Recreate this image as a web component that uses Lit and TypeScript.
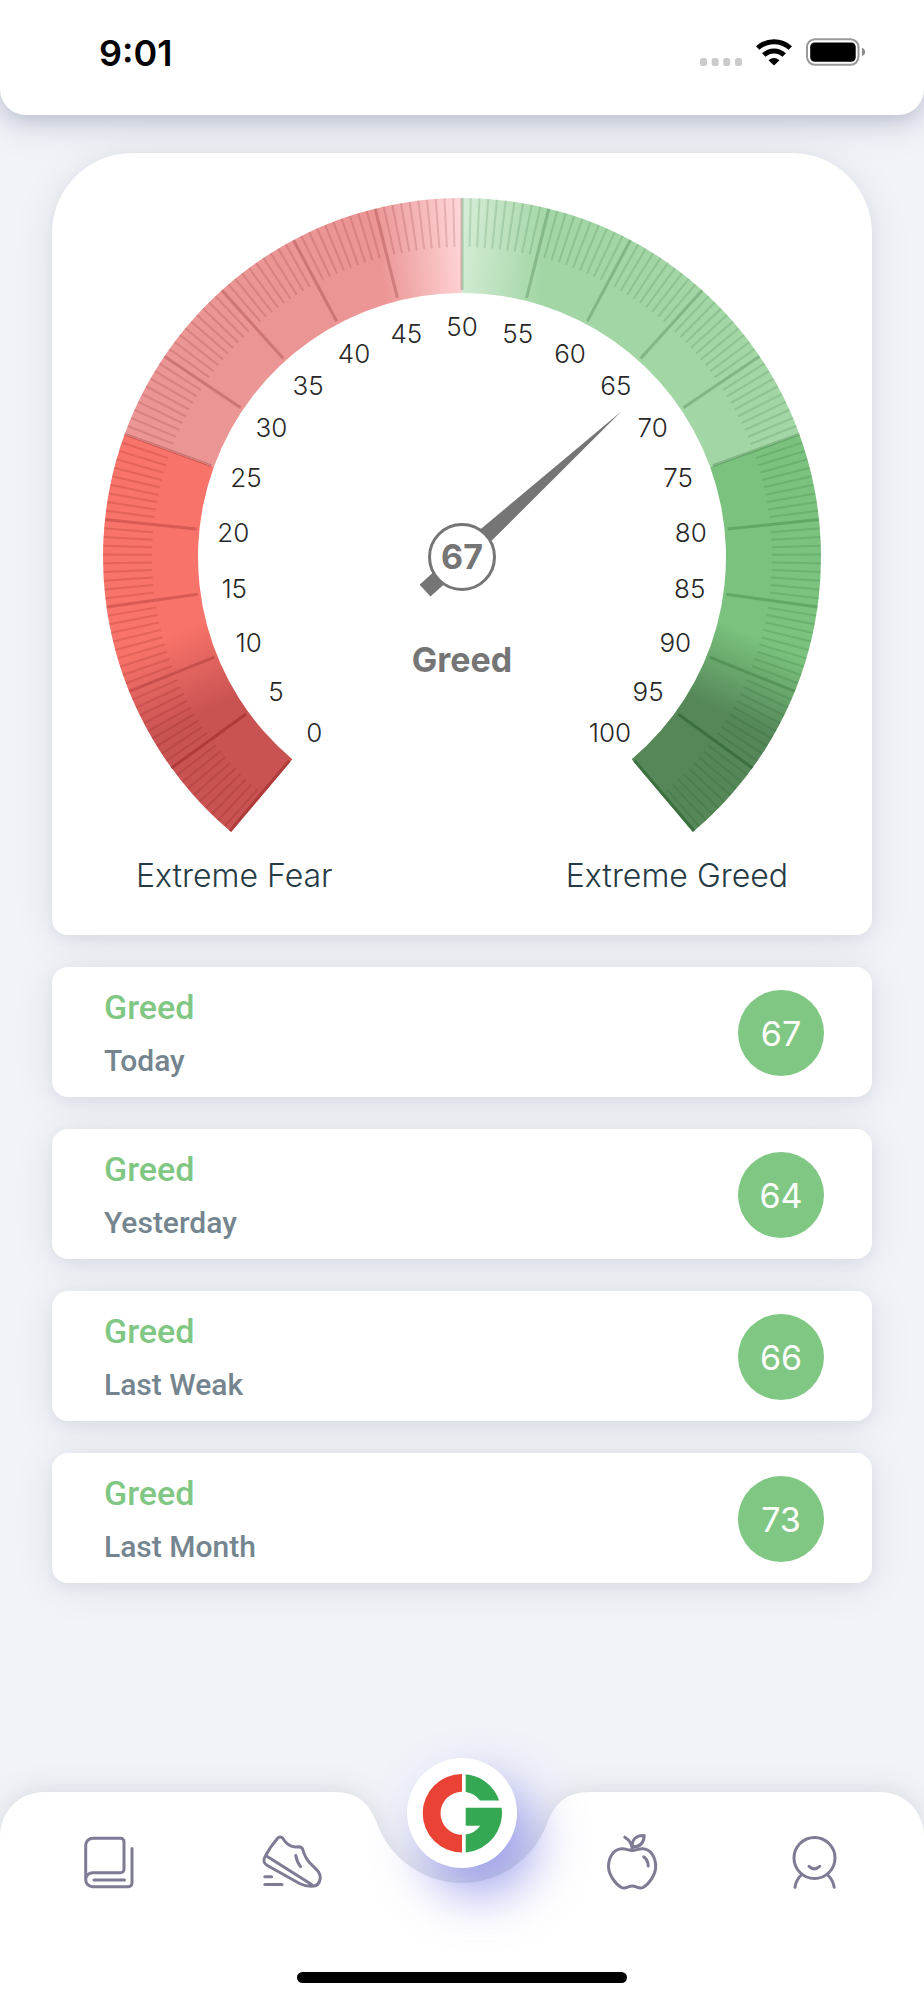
import { LitElement, html, svg, css } from "lit";
import { customElement, property } from "lit/decorators.js";

const CX = 410;
const CY = 404;
const OUTER = 359;
const INNER = 264;
const MINOR_INNER = 310;
const MAJOR_INNER = 267;
const LABEL_RADIUS = 230;

/* The scale sweeps 280 degrees, symmetric about twelve o'clock. */
const angleOf = (value: number) => ((value * 2.8 - 140) * Math.PI) / 180;
const pointAt = (value: number, radius: number) => {
  const a = angleOf(value);
  return [CX + radius * Math.sin(a), CY - radius * Math.cos(a)];
};
const f = (n: number) => n.toFixed(2);

function band(from: number, to: number): string {
  const [ax, ay] = pointAt(from, OUTER);
  const [bx, by] = pointAt(to, OUTER);
  const [cx, cy] = pointAt(to, INNER);
  const [dx, dy] = pointAt(from, INNER);
  return `M${f(ax)} ${f(ay)}A${OUTER} ${OUTER} 0 0 1 ${f(bx)} ${f(by)}L${f(cx)} ${f(cy)}A${INNER} ${INNER} 0 0 0 ${f(dx)} ${f(dy)}Z`;
}

function tick(value: number, inner: number): string {
  /* Marks at the two ends of the scale stay inside the band. */
  const v = Math.min(Math.max(value, 0.1), 99.9);
  const [ax, ay] = pointAt(v, OUTER);
  const [bx, by] = pointAt(v, inner);
  return `M${f(ax)} ${f(ay)}L${f(bx)} ${f(by)}`;
}

function ticks(from: number, to: number, major: boolean): string {
  let d = "";
  for (let half = from * 2; half <= to * 2; half++) {
    if ((half % 10 === 0) !== major) continue;
    d += tick(half / 2, major ? MAJOR_INNER : MINOR_INNER);
  }
  return d;
}

@customElement("sentiment-gauge")
class SentimentGauge extends LitElement {
  @property({ type: Number }) value = 0;
  @property() label = "";

  static styles = css`
    :host {
      display: block;
    }
    .dial {
      display: block;
      width: 100%;
      height: auto;
    }
    .scale {
      font: 350 26px Inter, "Liberation Sans", sans-serif;
      fill: #282828;
      text-anchor: middle;
    }
    .strong {
      font: 700 34px Inter, "Liberation Sans", sans-serif;
      fill: #757575;
      text-anchor: middle;
    }
    .major {
      fill: none;
      stroke-width: 3;
    }
    .minor {
      fill: none;
      stroke-width: 2;
    }
    .fear-tick {
      stroke: rgb(100, 8, 8);
    }
    .greed-tick {
      stroke: rgb(20, 75, 25);
    }
    .major.fear-tick,
    .major.greed-tick {
      stroke-opacity: 0.22;
    }
    .minor.fear-tick,
    .minor.greed-tick {
      stroke-opacity: 0.14;
    }
    .fear-deep {
      stroke: #b03b3b;
    }
    .greed-deep {
      stroke: #3c703f;
    }
    .needle {
      fill: #757575;
    }
    .hub {
      fill: #fff;
      stroke: #757575;
      stroke-width: 3;
    }
  `;

  render() {
    const marks = Array.from({ length: 21 }, (_, i) => i * 5);
    return html`<svg class="dial" viewBox="0 0 820 684" role="img" aria-label="${this.label}, ${this.value} of 100">
      <defs>
        <linearGradient id="fear" gradientUnits="userSpaceOnUse" x1="146" y1="470" x2="181" y2="545">
          <stop offset="0" stop-color="#f87369" />
          <stop offset="1" stop-color="#c95353" />
        </linearGradient>
        <linearGradient id="fear-soft" gradientUnits="userSpaceOnUse" x1="325" y1="92" x2="410" y2="82">
          <stop offset="0" stop-color="#eb9594" />
          <stop offset="1" stop-color="#ffd5d8" />
        </linearGradient>
        <linearGradient id="greed-soft" gradientUnits="userSpaceOnUse" x1="410" y1="82" x2="495" y2="92">
          <stop offset="0" stop-color="#d4ecd5" />
          <stop offset="1" stop-color="#a2d6a5" />
        </linearGradient>
        <linearGradient id="greed" gradientUnits="userSpaceOnUse" x1="674" y1="470" x2="639" y2="545">
          <stop offset="0" stop-color="#7ac27e" />
          <stop offset="1" stop-color="#558758" />
        </linearGradient>
      </defs>
      <path d=${band(0, 25)} fill="url(#fear)" />
      <path d=${band(25, 50)} fill="url(#fear-soft)" />
      <path d=${band(50, 75)} fill="url(#greed-soft)" />
      <path d=${band(75, 100)} fill="url(#greed)" />
      <path class="minor fear-tick" d=${ticks(0, 49.5, false)} />
      <path class="major fear-tick" d=${ticks(10, 45, true)} />
      <path class="major fear-deep" d=${ticks(0, 5, true)} />
      <path class="minor greed-tick" d=${ticks(50, 100, false)} />
      <path class="major greed-tick" d=${ticks(50, 90, true)} />
      <path class="major greed-deep" d=${ticks(95, 100, true)} />
      ${marks.map((m) => {
        const [x, y] = pointAt(m, LABEL_RADIUS);
        return svg`<text class="scale" x=${f(x)} y=${f(y + 9)}>${m}</text>`;
      })}
      <g transform="translate(${CX} ${CY}) rotate(${this.value * 2.8 - 140})">
        <path class="needle" d="M0-216L8-32H-8ZM-8 30H8V50H-8Z" />
      </g>
      <circle class="hub" cx=${CX} cy=${CY} r="32.5" />
      <text class="strong" x=${CX} y="416">${this.value}</text>
      <text class="strong" x=${CX} y="519">${this.label}</text>
    </svg>`;
  }
}

@customElement("history-card")
class HistoryCard extends LitElement {
  @property() mood = "";
  @property() period = "";
  @property({ type: Number }) score = 0;

  static styles = css`
    :host {
      display: flex;
      align-items: center;
      justify-content: space-between;
      padding: 20px 48px 18px 52px;
      border-radius: 16px;
      background: #fff;
      box-shadow: 0 4px 12px rgba(80, 96, 130, 0.08), 0 4px 44px rgba(20, 20, 30, 0.08);
      font-family: Roboto, "Liberation Sans", sans-serif;
      font-weight: 500;
    }
    .text {
      display: grid;
      gap: 16px;
    }
    .mood {
      font-size: 34px;
      line-height: 40px;
      color: #81c784;
    }
    .period {
      font-size: 30px;
      line-height: 36px;
      color: #74858f;
    }
    .score {
      display: grid;
      place-items: center;
      width: 86px;
      height: 86px;
      border-radius: 50%;
      background: #81c784;
      color: #fff;
      font: 400 34px Inter, "Liberation Sans", sans-serif;
    }
  `;

  render() {
    return html`
      <div class="text">
        <div class="mood">${this.mood}</div>
        <div class="period">${this.period}</div>
      </div>
      <div class="score">${this.score}</div>
    `;
  }
}

@customElement("status-header")
class StatusHeader extends LitElement {
  static styles = css`
    :host {
      display: flex;
      align-items: flex-start;
      justify-content: space-between;
      box-sizing: border-box;
      height: 115px;
      padding: 31px 59px 0 99px;
      border-radius: 0 0 26px 26px;
      background: #fff;
      box-shadow: 0 6px 20px rgba(80, 98, 130, 0.26), 0 8px 44px rgba(30, 30, 45, 0.1);
    }
    .time {
      font: 600 36px/44px Inter, "Liberation Sans", sans-serif;
      color: #000;
    }
    .icons {
      display: block;
      width: 166px;
      height: 30px;
      margin-top: 6px;
      overflow: visible;
    }
  `;

  render() {
    return html`
      <div class="time">9:01</div>
      <svg class="icons" viewBox="0 0 166 30" aria-label="Wi-Fi connected, battery full" role="img">
        <g fill="#cbcbcb">
          <rect x="1" y="21" width="7" height="8" rx="2.5" />
          <rect x="12.7" y="21" width="7" height="8" rx="2.5" />
          <rect x="24.2" y="21" width="7" height="8" rx="2.5" />
          <rect x="36" y="21" width="7" height="8" rx="2.5" />
        </g>
        <path d="M75 28.500L69.500 23.200Q75 18.800 80.500 23.200Z" />
        <g fill="none" stroke="#000" stroke-width="5">
          <path d="M64.800 18 A15 15 0 0 1 85.200 18" />
          <path d="M58.700 11 A24.300 24.300 0 0 1 91.300 11" />
        </g>
        <rect x="108" y="2.200" width="51.500" height="25.600" rx="8" fill="none" stroke="#999" stroke-width="2" />
        <rect x="111.200" y="5.500" width="45.500" height="19.200" rx="4.500" />
        <path d="M163 10.800q3.200 1.500 3.200 4.200t-3.200 4.200Z" fill="#8c8c8c" />
      </svg>
    `;
  }
}

@customElement("tab-bar")
class TabBar extends LitElement {
  static styles = css`
    :host {
      display: block;
      position: relative;
    }
    .backdrop {
      position: absolute;
      inset: 0;
      display: grid;
      grid-template-columns: 1fr 256px 1fr;
      filter: drop-shadow(0 -2px 14px rgba(50, 50, 60, 0.12));
    }
    .side {
      background: #fff;
    }
    .side.left {
      border-top-left-radius: 44px;
    }
    .side.right {
      border-top-right-radius: 44px;
    }
    .notch {
      display: block;
      width: 256px;
      height: 208px;
      fill: #fff;
    }
    .tabs {
      position: relative;
      display: grid;
      grid-template-columns: 1fr 1fr 158px 1fr 1fr;
      justify-items: center;
      box-sizing: border-box;
      height: 208px;
      padding: 41px 17px 0;
    }
    .tab {
      width: 60px;
      height: 60px;
      padding: 0;
      border: 0;
      background: none;
      cursor: pointer;
    }
    .tab svg {
      display: block;
      width: 60px;
      height: 60px;
      overflow: visible;
      fill: none;
      stroke: #7e7c95;
      stroke-width: 3;
      stroke-linecap: round;
      stroke-linejoin: round;
    }
    .main {
      width: 110px;
      height: 110px;
      margin-top: -75px;
      padding: 0;
      border: 0;
      border-radius: 50%;
      background: #fff;
      box-shadow: 18px 26px 50px rgba(90, 94, 220, 0.56);
      cursor: pointer;
    }
    .main svg {
      display: block;
      width: 110px;
      height: 110px;
    }
    .home {
      position: absolute;
      left: 50%;
      bottom: 17px;
      width: 330px;
      height: 11px;
      margin-left: -165px;
      border-radius: 6px;
      background: #000;
    }
  `;

  render() {
    return html`
      <div class="backdrop">
        <div class="side left"></div>
        <svg class="notch" viewBox="0 0 256 208" aria-hidden="true">
          <path d="M0 0C23 0 35.500 11 43 31.500A90.500 90.500 0 0 0 213 31.500C220.500 11 233 0 256 0V208H0Z" />
        </svg>
        <div class="side right"></div>
      </div>
      <nav class="tabs">
        <button class="tab" aria-label="Journal">
          <svg viewBox="1 0 60 60">
            <path d="M7.700 46.700V12.300a7 7 0 0 1 7-7H42.500a3.500 3.500 0 0 1 3.500 3.500V36.200a3.500 3.500 0 0 1-3.500 3.500H14.700a7 7 0 0 0 0 14H50.500a3.500 3.500 0 0 0 3.500-3.500V15.500M16 47H46.500" />
          </svg>
        </button>
        <button class="tab" aria-label="Activity">
          <svg viewBox="1 0 60 60">
            <path d="M4.700 22.500C8 16 12 10.500 16.400 5.500Q19 2.600 21.800 5.200C24.500 9.700 28.500 13.900 34.500 13.900L38 13.700Q40.800 13.700 41.800 16.500C43.500 24 47 28.500 51.500 32.700C56 37 59.600 39.500 59.200 45.500C58.600 50.500 55.500 53.200 51 53.200C46.500 53.400 42.500 52.500 38.500 50.500L6 32.300Q0.500 28.800 4.700 22.500L51 51.800" />
            <path d="M34.800 22.500Q35.800 29 39.600 33.600M3.800 43.800H10.600M3.800 51.400H21" />
          </svg>
        </button>
        <button class="main" aria-label="Sentiment">
          <svg viewBox="0 0 110 110">
            <path fill="#ea4335" d="M55 16A39.300 39.300 0 0 0 55 94.600V76.800A21.500 21.500 0 0 1 55 33.800Z" />
            <path fill="#34a853" d="M58.700 16.200A39.300 39.300 0 0 1 92.200 42.600H73A21.500 21.500 0 0 0 58.700 34ZM58.700 49.700H94.600A39.300 39.300 0 0 1 58.700 94.400V76.600A21.500 21.500 0 0 0 73.200 67.800H58.700Z" />
          </svg>
        </button>
        <button class="tab" aria-label="Nutrition">
          <svg viewBox="1 0 60 60">
            <path d="M30.300 17.500C26.500 17.500 24 15.700 20 15.800C11.500 16 6.500 24.500 6.500 33.500C6.500 42 14 51.500 19.500 54.500C23.500 56.600 26 53 30.200 53C34.400 53 37 56.600 41 54.500C46.500 51.500 53.700 42 53.700 33.500C53.700 24.500 49 16 40.500 15.800C36.500 15.700 34 17.500 30.300 17.500ZM30.300 17.500C30.300 11.500 27.500 7 22.800 4.200M30.300 13.900C29.800 6.500 34 2.200 42.200 2.400C42 9.800 37.800 14 30.300 13.900M41.700 23.800Q46 27 46.200 33" />
          </svg>
        </button>
        <button class="tab" aria-label="Profile">
          <svg viewBox="1 0 60 60">
            <circle cx="29.500" cy="25" r="20.500" />
            <path d="M16.800 41.500Q10.800 47 10 54.300M42.200 41.500Q48.200 47 49.200 54.300M24 33.300Q29.500 38.500 34.800 33.300" />
          </svg>
        </button>
      </nav>
      <div class="home"></div>
    `;
  }
}

@customElement("app-root")
class AppRoot extends LitElement {
  static styles = css`
    :host {
      display: flex;
      flex-direction: column;
      min-height: 100vh;
      background: #f1f3f9;
      overflow: hidden;
    }
    main {
      display: grid;
      gap: 32px;
      padding: 38px 52px 48px;
    }
    .gauge-card {
      padding-bottom: 40px;
      border-radius: 80px 80px 16px 16px;
      background: #fff;
      box-shadow: 0 4px 12px rgba(80, 96, 130, 0.08), 0 4px 44px rgba(20, 20, 30, 0.08);
    }
    .ends {
      display: flex;
      justify-content: space-between;
      padding: 20px 84px 0;
      font: 350 32px/38px Inter, "Liberation Sans", sans-serif;
      color: #263a45;
    }
    status-header {
      position: relative;
    }
    tab-bar {
      margin-top: auto;
    }
  `;

  private history = [
    { mood: "Greed", period: "Today", score: 67 },
    { mood: "Greed", period: "Yesterday", score: 64 },
    { mood: "Greed", period: "Last Weak", score: 66 },
    { mood: "Greed", period: "Last Month", score: 73 },
  ];

  render() {
    return html`
      <status-header></status-header>
      <main>
        <section class="gauge-card">
          <sentiment-gauge .value=${67} .label=${"Greed"}></sentiment-gauge>
          <div class="ends">
            <span>Extreme Fear</span>
            <span>Extreme Greed</span>
          </div>
        </section>
        ${this.history.map(
          (h) => html`<history-card .mood=${h.mood} .period=${h.period} .score=${h.score}></history-card>`
        )}
      </main>
      <tab-bar></tab-bar>
    `;
  }
}
